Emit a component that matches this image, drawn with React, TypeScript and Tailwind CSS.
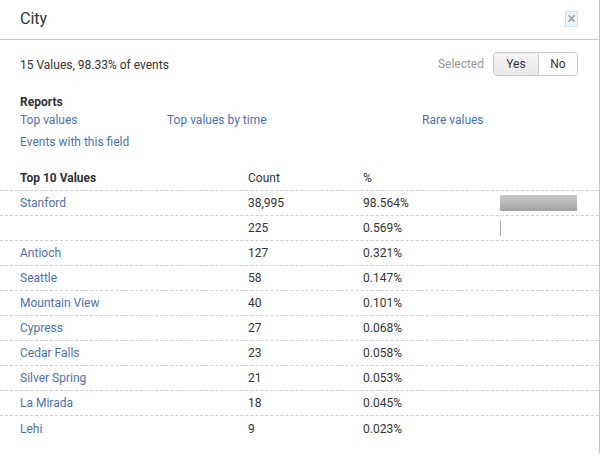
import React from 'react'

type Row = { name: string; count: string; pct: number }

const rows: Row[] = [
	{ name: 'Stanford', count: '38,995', pct: 98.564 },
	{ name: '', count: '225', pct: 0.569 },
	{ name: 'Antioch', count: '127', pct: 0.321 },
	{ name: 'Seattle', count: '58', pct: 0.147 },
	{ name: 'Mountain View', count: '40', pct: 0.101 },
	{ name: 'Cypress', count: '27', pct: 0.068 },
	{ name: 'Cedar Falls', count: '23', pct: 0.058 },
	{ name: 'Silver Spring', count: '21', pct: 0.053 },
	{ name: 'La Mirada', count: '18', pct: 0.045 },
	{ name: 'Lehi', count: '9', pct: 0.023 },
]

const BAR_MAX = 78

const Bar = ({ pct }: { pct: number }) => {
	const w = Math.round((pct / 100) * BAR_MAX)
	if (pct < 0.5) return null
	return (
		<div
			className="h-[16px] bg-gradient-to-b from-[#c9c9c9] to-[#a3a3a3]"
			style={{ width: Math.max(w, 1) }}
		/>
	)
}

export default function App() {
	return (
		<div className="w-[601px] h-[455px] bg-white text-[12px] text-[#333] font-['Roboto',sans-serif]">
			<div className="w-[600px] h-[455px] border-r border-[#c4c4c4] rounded-br-[4px] flex flex-col">
				{/* header */}
				<div className="h-[40px] border-b border-[#cccccc] flex items-center justify-between pl-[20px] pr-[22px]">
					<h3 className="text-[16px] leading-[20px] text-[#333] -mt-[2px]">City</h3>
					<button className="w-[11px] h-[14px] flex items-center justify-center bg-[#eef4fc] outline outline-1 outline-[#cfe0f5] text-[#9a9a9a] text-[16px] leading-none -mt-[2px]">
						×
					</button>
				</div>

				<div className="pl-[20px] pr-[21px]">
					{/* summary */}
					<div className="mt-[12px] h-[23px] flex items-center justify-between">
						<span className="mt-[2px]">15 Values, 98.33% of events</span>
						<div className="flex items-center">
							<span className="text-[#999] mr-[9px]">Selected</span>
							<div className="flex h-[24px] border border-[#c6c6c6] rounded-[4px] overflow-hidden">
								<button className="w-[45px] bg-gradient-to-b from-[#f5f5f5] to-[#e8e8e8] border-r border-[#d0d0d0] text-[#333]">Yes</button>
								<button className="w-[38px] bg-white text-[#333]">No</button>
							</div>
						</div>
					</div>

					{/* reports */}
					<div className="mt-[19px] font-bold leading-[16px]">Reports</div>
					<div className="-mt-[1px] grid grid-cols-[147px_255px_1fr] text-[#4d71ad] leading-[22px]">
						<a>Top values</a>
						<a>Top values by time</a>
						<a>Rare values</a>
						<a className="col-span-3">Events with this field</a>
					</div>
				</div>

				{/* table */}
				<div className="mt-[13px]">
					<div className="grid grid-cols-[228px_115px_137px_78px] h-[25px] items-center border-b border-dashed border-[#cfcfcf] pl-[20px]">
						<span className="font-bold">Top 10 Values</span>
						<span>Count</span>
						<span>%</span>
						<span />
					</div>
					{rows.map((r, i) => (
						<div
							key={i}
							className={`grid grid-cols-[228px_115px_137px_78px] h-[25px] items-center pl-[20px] ${i < rows.length - 1 ? 'border-b border-dashed border-[#cfcfcf]' : ''}`}
						>
							<a className="text-[#4d71ad]">{r.name}</a>
							<span>{r.count}</span>
							<span>{r.pct.toFixed(3)}%</span>
							<Bar pct={r.pct} />
						</div>
					))}
				</div>
			</div>
		</div>
	)
}
